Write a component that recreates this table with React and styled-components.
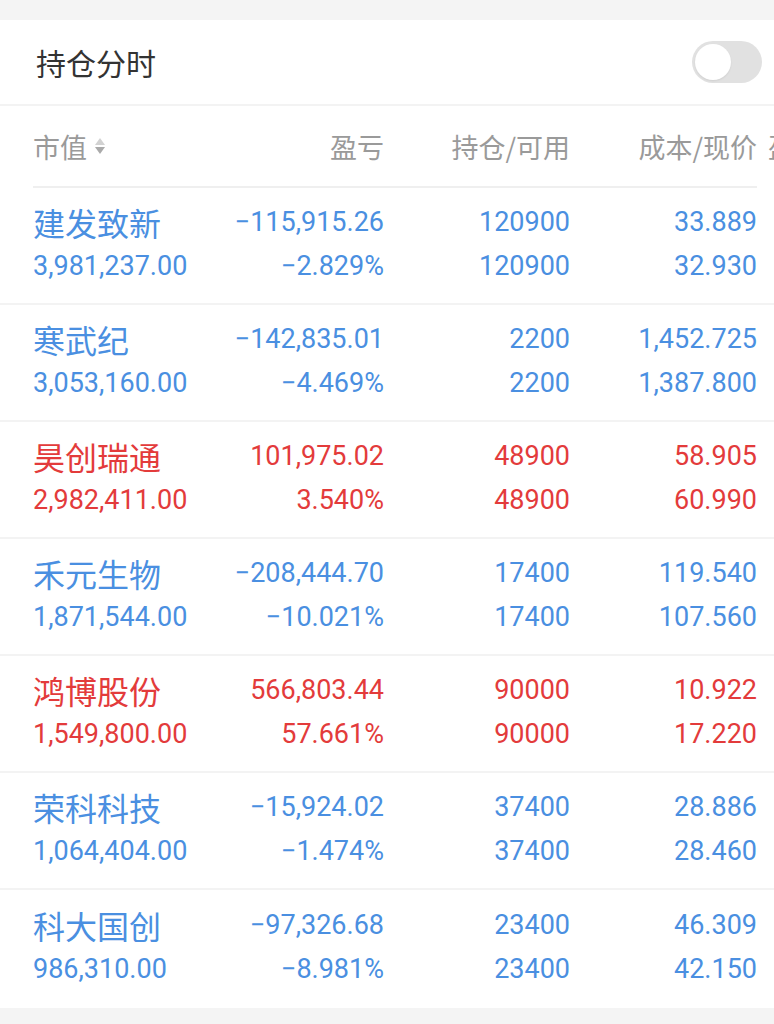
import React from 'react';
import styled, { createGlobalStyle } from 'styled-components';

const GlobalStyle = createGlobalStyle`
  html, body {
    margin: 0;
    padding: 0;
    background: #f4f4f4;
    font-family: Roboto, "Noto Sans CJK SC", "Noto Sans", sans-serif;
  }
`;

const Page = styled.div`
  padding: 20px 0 16px 0;
  width: 774px;
`;

const Card = styled.div`
  background: #fff;
  overflow: hidden;
`;

const TitleBar = styled.div`
  display: flex;
  align-items: center;
  justify-content: space-between;
  height: 84px;
  padding: 0 12px 0 36px;
  border-bottom: 2px solid #f3f3f3;
`;

const Title = styled.span`
  font-size: 30px;
  color: #333;
  font-family: "Noto Sans CJK SC", sans-serif;
`;

const Toggle = styled.div`
  width: 70px;
  height: 42px;
  border-radius: 21px;
  background: #e1e1e1;
  display: flex;
  align-items: center;
  padding: 0 3px;
  box-sizing: border-box;
`;

const Knob = styled.div`
  width: 36px;
  height: 36px;
  border-radius: 50%;
  background: #fff;
  box-shadow: 0 1px 2px rgba(0, 0, 0, 0.08);
`;

// header scrolls sideways in the app, so the next column peeks in at the edge
const HeaderWrap = styled.div`
  overflow: hidden;
  width: 774px;
`;

const HeaderRow = styled.div`
  display: grid;
  grid-template-columns: 200px 151px 186px 187px 120px;
  align-items: center;
  height: 80px;
  margin-left: 33px;
  width: 724px;
  border-bottom: 2px solid #efefef;
  white-space: nowrap;
`;

const HeaderCell = styled.div`
  font-size: 27px;
  color: #9a9a9a;
  font-family: "Noto Sans CJK SC", sans-serif;
  display: flex;
  align-items: center;
  justify-content: ${p => (p.left ? 'flex-start' : 'flex-end')};
  padding-left: ${p => (p.extra ? '11px' : '0')};
`;

const Row = styled.div`
  display: grid;
  grid-template-columns: 200px 151px 186px 187px;
  grid-template-rows: 44px 44px;
  align-content: center;
  box-sizing: border-box;
  height: ${p => (p.last ? '118px' : '117px')};
  padding: 0 17px 4px 33px;
  border-bottom: ${p => (p.last ? 'none' : '2px solid #f3f3f3')};
  color: ${p => (p.up ? '#e33b3b' : '#4a8fe1')};
`;

const Name = styled.div`
  font-size: 32px;
  font-family: "Noto Sans CJK SC", sans-serif;
  line-height: 44px;
  white-space: nowrap;
`;

const Num = styled.div`
  font-size: 27px;
  line-height: 44px;
  text-align: ${p => (p.left ? 'left' : 'right')};
  font-family: Roboto, sans-serif;
  white-space: nowrap;
`;

const SortIcon = () => (
  <svg width="12" height="18" viewBox="0 0 12 18" style={{ marginLeft: 7 }}>
    <path d="M6 1 L11 8 L1 8 Z" fill="#d2d2d2" />
    <path d="M1 10 L11 10 L6 17 Z" fill="#aaaaaa" />
  </svg>
);

const positions = [
  { name: '建发致新', mv: '3,981,237.00', pl: '−115,915.26', pct: '−2.829%', qty: '120900', avail: '120900', cost: '33.889', price: '32.930' },
  { name: '寒武纪', mv: '3,053,160.00', pl: '−142,835.01', pct: '−4.469%', qty: '2200', avail: '2200', cost: '1,452.725', price: '1,387.800' },
  { name: '昊创瑞通', mv: '2,982,411.00', pl: '101,975.02', pct: '3.540%', qty: '48900', avail: '48900', cost: '58.905', price: '60.990', up: true },
  { name: '禾元生物', mv: '1,871,544.00', pl: '−208,444.70', pct: '−10.021%', qty: '17400', avail: '17400', cost: '119.540', price: '107.560' },
  { name: '鸿博股份', mv: '1,549,800.00', pl: '566,803.44', pct: '57.661%', qty: '90000', avail: '90000', cost: '10.922', price: '17.220', up: true },
  { name: '荣科科技', mv: '1,064,404.00', pl: '−15,924.02', pct: '−1.474%', qty: '37400', avail: '37400', cost: '28.886', price: '28.460' },
  { name: '科大国创', mv: '986,310.00', pl: '−97,326.68', pct: '−8.981%', qty: '23400', avail: '23400', cost: '46.309', price: '42.150' },
];

export default function App() {
  return (
    <Page>
      <GlobalStyle />
      <Card>
        <TitleBar>
          <Title>持仓分时</Title>
          <Toggle>
            <Knob />
          </Toggle>
        </TitleBar>
        <HeaderWrap>
          <HeaderRow>
            <HeaderCell left>
              市值
              <SortIcon />
            </HeaderCell>
            <HeaderCell>盈亏</HeaderCell>
            <HeaderCell>持仓/可用</HeaderCell>
            <HeaderCell>成本/现价</HeaderCell>
            <HeaderCell left extra>盈亏比</HeaderCell>
          </HeaderRow>
        </HeaderWrap>
        {positions.map((p, i) => (
          <Row key={p.name} up={p.up} last={i === positions.length - 1}>
            <Name>{p.name}</Name>
            <Num>{p.pl}</Num>
            <Num>{p.qty}</Num>
            <Num>{p.cost}</Num>
            <Num left>{p.mv}</Num>
            <Num>{p.pct}</Num>
            <Num>{p.avail}</Num>
            <Num>{p.price}</Num>
          </Row>
        ))}
      </Card>
    </Page>
  );
}
